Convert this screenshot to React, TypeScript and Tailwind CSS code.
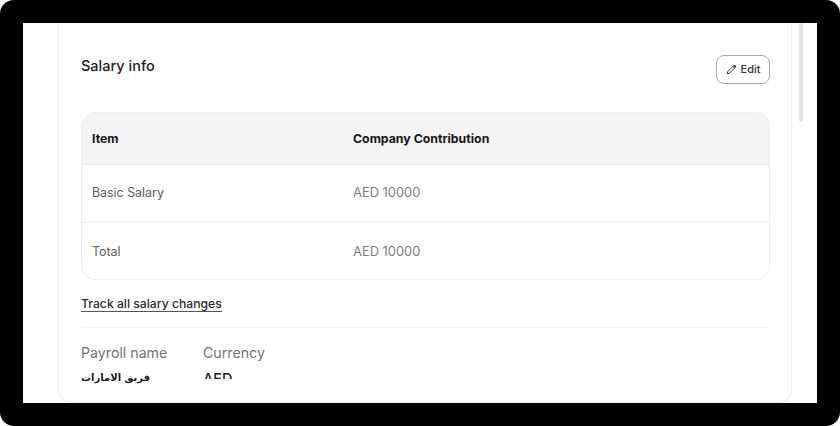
const font = "font-['Inter','Noto_Sans',sans-serif]";

function PencilIcon() {
    return (
        <svg width="11" height="11" viewBox="0 0 11 11" fill="none" className="text-[#333333]">
            <path d="M1.2 9.8 L1.7 7.6 L6.6 2.7 L8.3 4.4 L3.4 9.3 Z" stroke="currentColor" strokeWidth="1" strokeLinejoin="round" />
            <path d="M7 1.9 L8 0.9 Q8.5 0.5 9 0.9 L10.1 2 Q10.5 2.5 10.1 3 L9.1 4 Z" fill="currentColor" />
        </svg>
    );
}

function Row({ item, value, last }: { item: string; value: string; last?: boolean }) {
    return (
        <div className={`flex items-center h-[58px] pb-[1px] ${last ? "" : "border-b border-[#eeeeee]"}`}>
            <div className="w-[271px] pl-[10px] text-[12.4px] leading-[18px] text-[#5c5c5c]">{item}</div>
            <div className="text-[12.9px] leading-[18px] text-[#7d7d7d]">{value}</div>
        </div>
    );
}

export default function App() {
    return (
        <div className={`w-[840px] h-[426px] bg-white ${font}`}>
            <div className="w-full h-full bg-black rounded-[14px] pt-[23px] px-[23px] pb-[23px]">
                <div className="relative w-full h-full bg-white overflow-hidden pl-[35px]">
                    {/* Card, top is scrolled out of view */}
                    <div className="w-[734px] h-[380px] border-x border-b border-[#eeeeee] rounded-b-[14px] pl-[22px] pr-[21px]">
                        <div className="flex justify-between items-start h-[89px] pt-[32px]">
                            <h2 className="mt-[1px] text-[14.5px] leading-[20px] font-medium text-[#1c1c1c]">Salary info</h2>
                            <button className="flex items-center justify-center gap-[4px] w-[54px] h-[29px] border border-[#a8a8a8] rounded-[8px] text-[11px] font-medium text-[#333333]">
                                <PencilIcon />
                                Edit
                            </button>
                        </div>

                        <div className="h-[168px] border border-[#eeeeee] rounded-[14px] overflow-hidden">
                            <div className="flex items-center h-[52px] pt-[1px] bg-[#f4f4f4] border-b border-[#e9e9e9] text-[12.3px] font-bold text-[#161616]">
                                <div className="w-[271px] pl-[10px]">Item</div>
                                <div>Company Contribution</div>
                            </div>
                            <Row item="Basic Salary" value="AED 10000" />
                            <Row item="Total" value="AED 10000" last />
                        </div>

                        <div className="h-[47px] pt-[16px]">
                            <a href="#" className="block w-fit text-[12.2px] leading-[15px] font-medium text-[#2a2a2a] border-b border-[#555555]">
                                Track all salary changes
                            </a>
                        </div>

                        <div className="border-t border-[#f5f5f5] pt-[15px] flex gap-[36px]">
                            <div className="w-[86px]">
                                <div className="text-[14.2px] leading-[20px] text-[#737373] whitespace-nowrap">Payroll name</div>
                                <div className="mt-[5px] text-[10px] leading-[20px] font-bold text-[#1a1a1a] font-['DejaVu_Sans',sans-serif] whitespace-nowrap text-left" dir="ltr">فريق الامارات</div>
                            </div>
                            <div>
                                <div className="text-[14.2px] leading-[20px] text-[#737373]">Currency</div>
                                <div className="mt-[7px] h-[9px] overflow-hidden text-[14.5px] leading-[18px] font-medium text-[#1a1a1a]">AED</div>
                            </div>
                        </div>
                    </div>

                    {/* Scrollbar thumb */}
                    <div className="absolute top-0 left-[776px] w-[4px] h-[99px] rounded-full bg-[#e4e4e4]" />
                </div>
            </div>
        </div>
    );
}
